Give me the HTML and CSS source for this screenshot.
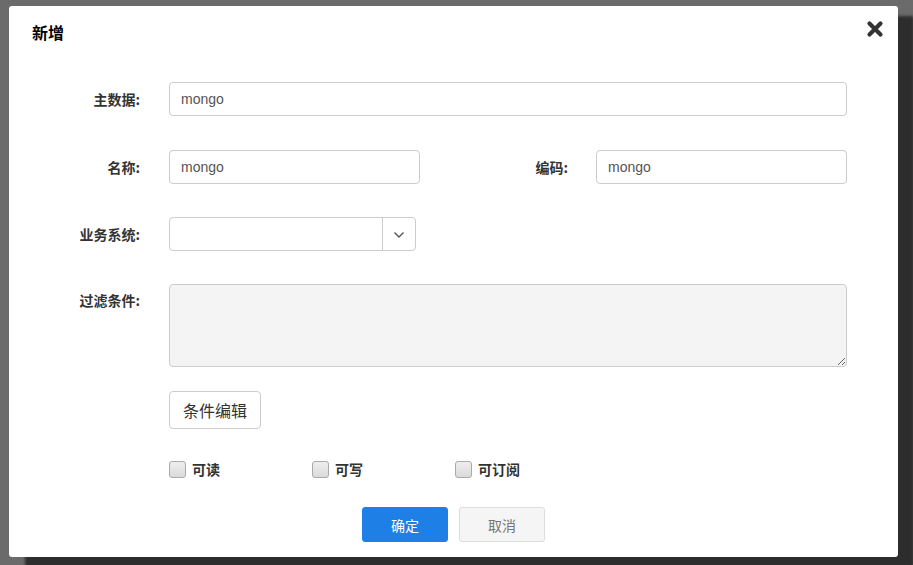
FILE: index.html
```html
<!DOCTYPE html>
<html lang="zh-CN">
<head>
<meta charset="utf-8">
<title>新增</title>
<link rel="stylesheet" href="styles.css">
</head>
<body>
<div class="dialog">
  <div class="header">
    <div class="title">新增</div>
    <button class="close" aria-label="close">
      <svg width="18" height="18" viewBox="0 0 18 18"><path d="M3.5 3.5 L14.5 14.5 M14.5 3.5 L3.5 14.5" stroke="#333" stroke-width="4.2" stroke-linecap="round" fill="none"/></svg>
    </button>
  </div>
  <div class="body">
    <div class="row">
      <label class="label">主数据:</label>
      <div class="field"><input class="input" type="text" value="mongo"></div>
    </div>
    <div class="row row-2">
      <label class="label">名称:</label>
      <div class="field split">
        <input class="input" type="text" value="mongo">
        <label class="label label-2">编码:</label>
        <input class="input" type="text" value="mongo">
      </div>
    </div>
    <div class="row row-3">
      <label class="label">业务系统:</label>
      <div class="field">
        <div class="select">
          <div class="select-value"></div>
          <div class="select-arrow">
            <svg width="12" height="8" viewBox="0 0 12 8"><path d="M1.5 1.5 L6 6 L10.5 1.5" stroke="#555" stroke-width="1.4" fill="none"/></svg>
          </div>
        </div>
      </div>
    </div>
    <div class="row row-top">
      <label class="label label-top">过滤条件:</label>
      <div class="field"><textarea class="textarea" readonly></textarea></div>
    </div>
    <div class="row row-btn">
      <div class="spacer"></div>
      <button class="btn-edit">条件编辑</button>
    </div>
    <div class="checks">
      <label class="check"><input type="checkbox" class="cb"><span>可读</span></label>
      <label class="check"><input type="checkbox" class="cb"><span>可写</span></label>
      <label class="check"><input type="checkbox" class="cb"><span>可订阅</span></label>
    </div>
  </div>
  <div class="footer">
    <button class="btn btn-primary">确定</button>
    <button class="btn btn-default">取消</button>
  </div>
</div>
</body>
</html>
```

FILE: styles.css
```css
* { box-sizing: border-box; }
html, body { margin: 0; padding: 0; }
html { background: #6b6b6b; }
body {
  width: 913px;
  height: 565px;
  font-family: "Liberation Sans", "Noto Sans CJK SC", sans-serif;
  font-size: 14px;
  color: #333;
}
.dialog {
  margin: 6px 0 0 9px;
  width: 889px;
  height: 551px;
  background: #fff;
  border-radius: 3px;
  box-shadow: 16px 10px 3px 0 rgba(0, 0, 0, 0.58);
  display: flex;
  flex-direction: column;
}
.header {
  height: 52px;
  display: flex;
  justify-content: space-between;
  align-items: center;
  padding: 0 14px 0 23px;
}
.title {
  font-family: "Noto Sans CJK SC", sans-serif;
  font-size: 16px;
  font-weight: bold;
  color: #000;
  line-height: 20px;
}
.close {
  border: 0;
  background: none;
  padding: 0;
  width: 18px;
  height: 18px;
  margin-top: -6px;
  display: block;
}
.close svg { display: block; }
.body {
  padding: 24px 51px 0 0;
}
.row {
  display: flex;
  align-items: center;
  height: 34px;
  margin-bottom: 34px;
}
.row-2, .row-3 { margin-bottom: 33px; }
.label {
  width: 131px;
  margin-right: 29px;
  flex: none;
  text-align: right;
  font-family: "Noto Sans CJK SC", sans-serif;
  font-weight: bold;
  font-size: 14px;
  line-height: 20px;
  color: #333;
}
.field { flex: 1; display: flex; height: 100%; }
.split { align-items: center; }
.split .input { flex: 1; width: 0; }
.label-2 { width: 148px; margin-right: 28px; }
.input {
  width: 100%;
  height: 34px;
  border: 1px solid #ccc;
  border-radius: 4px;
  padding: 0 11px;
  font-family: "Liberation Sans", sans-serif;
  font-size: 14px;
  color: #555;
  background: #fff;
  outline: none;
}
.select {
  width: 247px;
  height: 34px;
  border: 1px solid #ccc;
  border-radius: 4px;
  display: flex;
  background: #fff;
}
.select-value { flex: 1; }
.select-arrow {
  width: 33px;
  border-left: 1px solid #ccc;
  display: flex;
  align-items: center;
  justify-content: center;
}
.select-arrow svg { display: block; margin-top: 1px; }
.row-top {
  align-items: flex-start;
  height: 83px;
  margin-bottom: 24px;
}
.label-top { margin-top: 6px; }
.textarea {
  width: 100%;
  height: 83px;
  border: 1px solid #ccc;
  border-radius: 4px;
  background: #f4f4f4;
  outline: none;
  resize: both;
  font-family: "Liberation Sans", sans-serif;
}
.row-btn { height: 38px; margin-bottom: 32px; }
.spacer { width: 160px; flex: none; }
.btn-edit {
  height: 38px;
  padding: 0 13px;
  border: 1px solid #ccc;
  border-radius: 4px;
  background: #fff;
  font-family: "Noto Sans CJK SC", sans-serif;
  font-size: 16px;
  color: #333;
  line-height: 20px;
}
.checks {
  display: flex;
  padding-left: 160px;
  height: 17px;
}
.check {
  width: 143px;
  display: flex;
  align-items: center;
  font-family: "Noto Sans CJK SC", sans-serif;
  font-weight: bold;
  font-size: 14px;
  line-height: 17px;
  color: #333;
}
.cb {
  -webkit-appearance: none;
  appearance: none;
  margin: 0 6px 0 0;
  width: 17px;
  height: 17px;
  border: 1px solid #aaa;
  border-radius: 3px;
  background: linear-gradient(#eeeeee, #dadada);
  flex: none;
}
.footer {
  display: flex;
  justify-content: center;
  gap: 11px;
  margin-top: 29px;
}
.btn {
  width: 86px;
  height: 35px;
  border-radius: 3px;
  font-family: "Noto Sans CJK SC", sans-serif;
  font-size: 14px;
  line-height: 20px;
}
.btn-primary {
  background: #1e7fe6;
  border: 1px solid #1e7fe6;
  color: #fff;
}
.btn-default {
  background: #f5f5f5;
  border: 1px solid #ddd;
  color: #777;
}
```
